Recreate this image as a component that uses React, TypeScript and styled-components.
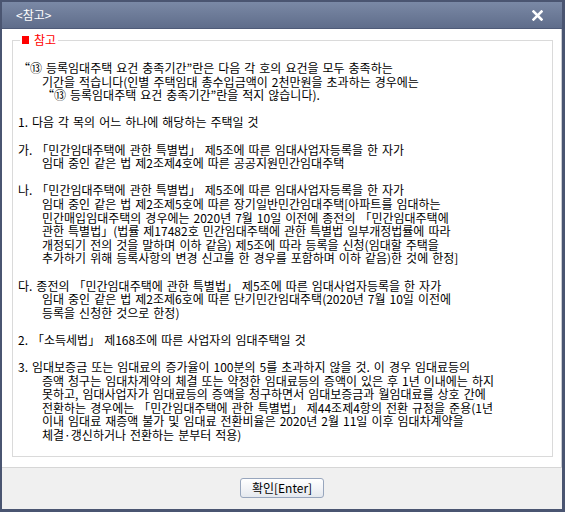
import React from "react";
import styled, { createGlobalStyle } from "styled-components";

const GlobalStyle = createGlobalStyle`
  html, body {
    margin: 0;
    padding: 0;
    width: 565px;
    height: 512px;
    overflow: hidden;
    background: #4a5571;
  }
  * {
    box-sizing: border-box;
  }
`;

const FONT = `"Noto Sans CJK KR", "Liberation Sans", sans-serif`;

const Window = styled.div`
  width: 565px;
  height: 512px;
  display: flex;
  flex-direction: column;
  background: #4a5571;
  border-style: solid;
  border-color: #4a5571;
  border-width: 2px 3px 3px 2px;
  font-family: ${FONT};
`;

const TitleBar = styled.div`
  height: 27px;
  flex: none;
  display: flex;
  align-items: center;
  justify-content: space-between;
  padding: 0 19px 0 14px;
  background: linear-gradient(to bottom, #7a89a6 0%, #6e7c99 45%, #5f6d8b 100%);
  border-bottom: 1px solid #4f5b78;
`;

const Title = styled.span`
  color: #ffffff;
  font-size: 12px;
  line-height: 14px;
`;

const CloseButton = styled.button`
  border: 0;
  padding: 0;
  background: none;
  width: 11px;
  height: 11px;
  display: flex;
  cursor: pointer;
`;

const Body = styled.div`
  flex: 1;
  min-height: 0;
  display: flex;
  flex-direction: column;
  background: #ffffff;
  padding: 4px 8px 10px 10px;
  border-right: 1px solid #c9ccd3;
`;

const Fieldset = styled.fieldset`
  flex: 1;
  min-width: 0;
  margin: 0;
  padding: 14px 5px 0 5px;
  border: 1px solid #dadada;
`;

const Legend = styled.legend`
  padding: 0 2px;
  margin-left: 2px;
  display: flex;
  align-items: center;
  color: #ff0000;
  font-size: 12px;
  line-height: 14px;
`;

const RedSquare = styled.span`
  display: inline-block;
  width: 7px;
  height: 8px;
  margin-right: 5px;
  background: #ff0000;
`;

const Para = styled.div`
  margin-bottom: 13.6px;
  font-size: 12px;
  line-height: 13.6px;
  color: #000000;
  word-spacing: 1.3px;
`;

const Line = styled.div<{ $indent?: boolean }>`
  white-space: nowrap;
  padding-left: ${(p) => (p.$indent ? "24px" : "0")};
`;

const OpenQuote = styled.span`
  font-feature-settings: "fwid";
`;

const Footer = styled.div`
  flex: none;
  height: 42px;
  display: flex;
  justify-content: center;
  align-items: flex-start;
  padding-top: 10px;
  background: #f0f0f0;
  border-top: 1px solid #d6d6d6;
`;

const OkButton = styled.button`
  width: 84px;
  height: 20px;
  padding: 0;
  font-family: ${FONT};
  font-size: 12px;
  line-height: 16px;
  color: #000000;
  background: linear-gradient(to bottom, #ffffff 0%, #f3f4f7 50%, #e4e8ee 100%);
  border: 1px solid #98a6bd;
  border-radius: 3px;
  cursor: pointer;
`;

const paragraphs: string[][] = [
  [
    "“⑬ 등록임대주택 요건 충족기간”란은 다음 각 호의 요건을 모두 충족하는",
    "기간을 적습니다(인별 주택임대 총수입금액이 2천만원을 초과하는 경우에는",
    "“⑬ 등록임대주택 요건 충족기간”란을 적지 않습니다).",
  ],
  ["1. 다음 각 목의 어느 하나에 해당하는 주택일 것"],
  [
    "가. 「민간임대주택에 관한 특별법」 제5조에 따른 임대사업자등록을 한 자가",
    "임대 중인 같은 법 제2조제4호에 따른 공공지원민간임대주택",
  ],
  [
    "나. 「민간임대주택에 관한 특별법」 제5조에 따른 임대사업자등록을 한 자가",
    "임대 중인 같은 법 제2조제5호에 따른 장기일반민간임대주택[아파트를 임대하는",
    "민간매입임대주택의 경우에는 2020년 7월 10일 이전에 종전의 「민간임대주택에",
    "관한 특별법」(법률 제17482호 민간임대주택에 관한 특별법 일부개정법률에 따라",
    "개정되기 전의 것을 말하며 이하 같음) 제5조에 따라 등록을 신청(임대할 주택을",
    "추가하기 위해 등록사항의 변경 신고를 한 경우를 포함하며 이하 같음)한 것에 한정]",
  ],
  [
    "다. 종전의 「민간임대주택에 관한 특별법」 제5조에 따른 임대사업자등록을 한 자가",
    "임대 중인 같은 법 제2조제6호에 따른 단기민간임대주택(2020년 7월 10일 이전에",
    "등록을 신청한 것으로 한정)",
  ],
  ["2. 「소득세법」 제168조에 따른 사업자의 임대주택일 것"],
  [
    "3. 임대보증금 또는 임대료의 증가율이 100분의 5를 초과하지 않을 것. 이 경우 임대료등의",
    "증액 청구는 임대차계약의 체결 또는 약정한 임대료등의 증액이 있은 후 1년 이내에는 하지",
    "못하고, 임대사업자가 임대료등의 증액을 청구하면서 임대보증금과 월임대료를 상호 간에",
    "전환하는 경우에는 「민간임대주택에 관한 특별법」 제44조제4항의 전환 규정을 준용(1년",
    "이내 임대료 재증액 불가 및 임대료 전환비율은 2020년 2월 11일 이후 임대차계약을",
    "체결·갱신하거나 전환하는 분부터 적용)",
  ],
];

// opening curly quote is full-width in the original font
const renderLine = (text: string) =>
  text.split(/(“)/).map((part, k) =>
    part === "“" ? <OpenQuote key={k}>{part}</OpenQuote> : part
  );

const CloseIcon = () => (
  <svg width="11" height="11" viewBox="0 0 11 11">
    <path
      d="M1.5 1.5 L9.5 9.5 M9.5 1.5 L1.5 9.5"
      stroke="#ffffff"
      strokeWidth="2.5"
      strokeLinecap="square"
      fill="none"
    />
  </svg>
);

export default function App() {
  return (
    <>
      <GlobalStyle />
      <Window>
        <TitleBar>
          <Title>&lt;참고&gt;</Title>
          <CloseButton aria-label="닫기">
            <CloseIcon />
          </CloseButton>
        </TitleBar>
        <Body>
          <Fieldset>
            <Legend>
              <RedSquare />
              참고
            </Legend>
            {paragraphs.map((lines, i) => (
              <Para key={i}>
                {lines.map((line, j) => (
                  <Line key={j} $indent={j > 0}>
                    {renderLine(line)}
                  </Line>
                ))}
              </Para>
            ))}
          </Fieldset>
        </Body>
        <Footer>
          <OkButton>확인[Enter]</OkButton>
        </Footer>
      </Window>
    </>
  );
}
